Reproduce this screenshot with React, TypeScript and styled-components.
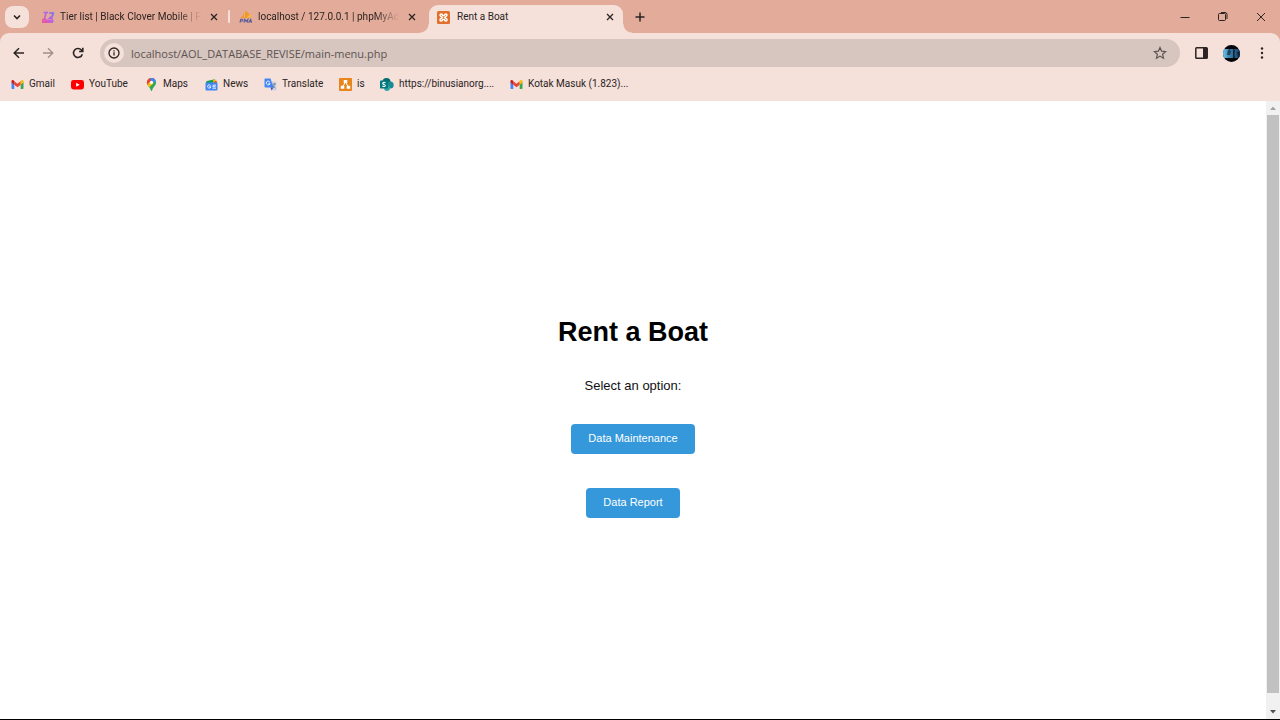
import React from "react";
import styled, { createGlobalStyle } from "styled-components";

const GlobalStyle = createGlobalStyle`
  *, *::before, *::after { box-sizing: border-box; }
  body { margin: 0; background: #fff; }
  button { border: 0; padding: 0; margin: 0; background: none; font: inherit; color: inherit; cursor: pointer; }
  a { color: inherit; text-decoration: none; }
  svg { display: block; flex: none; }
`;

const Window = styled.div`
  display: flex;
  flex-direction: column;
  min-height: 100vh;
  border-bottom: 1px solid #000;
  font-family: Roboto, "Open Sans", sans-serif;
  font-size: 10px;
  color: #2b2422;
`;

const TabStrip = styled.header`
  display: flex;
  align-items: stretch;
  height: 33px;
  padding-left: 5px;
  background: #e3ab99;
`;

const TabSearch = styled.button`
  display: grid;
  place-items: center;
  align-self: center;
  width: 24px;
  height: 22px;
  margin-right: 4px;
  border-radius: 8px;
  background: #f5e0da;
`;

const TabList = styled.div`
  display: flex;
  padding-top: 5px;
`;

const TabItem = styled.div<{ $active?: boolean; $divided?: boolean }>`
  position: relative;
  display: flex;
  align-items: center;
  gap: ${(p) => (p.$active ? 7 : 5)}px;
  width: ${(p) => (p.$active ? 194 : 198)}px;
  height: 28px;
  padding: 0 ${(p) => (p.$active ? 5 : 9)}px 4px 8px;
  border-radius: 9px 9px 0 0;
  background: ${(p) => (p.$active ? "#f5e0da" : "transparent")};

  ${(p) =>
    p.$active &&
    `
    &::before, &::after {
      content: "";
      position: absolute;
      bottom: 0;
      width: 9px;
      height: 9px;
    }
    &::before { left: -9px; background: radial-gradient(circle at 0 0, transparent 8px, #f5e0da 9px); }
    &::after { right: -9px; background: radial-gradient(circle at 100% 0, transparent 8px, #f5e0da 9px); }
  `}
  ${(p) =>
    p.$divided &&
    `
    &::before {
      content: "";
      position: absolute;
      left: -3px;
      top: 5px;
      width: 2px;
      height: 13px;
      border-radius: 1px;
      background: #f5e0da;
    }
  `}
`;

const TabTitle = styled.button<{ $fade?: boolean }>`
  flex: 1;
  min-width: 0;
  height: 16px;
  line-height: 16px;
  overflow: hidden;
  white-space: nowrap;
  text-align: left;
  ${(p) => p.$fade && "mask-image: linear-gradient(to right, #000 calc(100% - 24px), transparent);"}
`;

const SmallButton = styled.button`
  display: grid;
  place-items: center;
  width: 16px;
  height: 16px;
  flex: none;
`;

const NewTab = styled(SmallButton)`
  align-self: center;
  margin-left: 9px;
`;

const WindowControls = styled.div`
  display: flex;
  margin-left: auto;
`;

const WindowButton = styled.button`
  display: grid;
  place-items: center;
  width: 38px;
`;

const ToolbarArea = styled.div`
  background: #e3ab99;
`;

const ToolbarPanel = styled.div`
  height: 68px;
  padding: 6px 8px 0;
  border-radius: 9px 9px 0 0;
  background: #f5e0da;
`;

const Toolbar = styled.div`
  display: flex;
  align-items: center;
  height: 28px;
`;

const ToolButton = styled.button`
  display: grid;
  place-items: center;
  width: 30px;
  height: 28px;
  flex: none;

  &:first-child { width: 22px; margin-right: 3px; }
  &:last-child { width: 22px; margin-left: 5px; margin-right: -1px; }
  &:disabled { color: #a28f89; }
`;

const AddressBar = styled.form`
  display: flex;
  align-items: center;
  gap: 7px;
  flex: 1;
  height: 28px;
  margin: 0 6px 0 7px;
  padding: 0 12px 0 4px;
  border-radius: 14px;
  background: #d7c5bf;
`;

const SiteInfo = styled.button`
  display: grid;
  place-items: center;
  width: 20px;
  height: 20px;
  border-radius: 10px;
  background: #f5e0da;
`;

const AddressInput = styled.input`
  flex: 1;
  min-width: 0;
  height: 20px;
  padding: 0;
  border: 0;
  outline: 0;
  background: none;
  font-family: "Open Sans", "Noto Sans", sans-serif;
  font-size: 11px;
  color: #5d5451;
`;

const Bookmarks = styled.nav`
  display: flex;
  align-items: center;
  height: 34px;
  padding-left: 3px;
`;

const Bookmark = styled.a<{ $width: number }>`
  display: flex;
  align-items: center;
  gap: 5px;
  width: ${(p) => p.$width}px;
  line-height: 16px;
  white-space: nowrap;
`;

const Viewport = styled.div`
  display: flex;
  flex: 1;
  background: #fff;
`;

const Page = styled.main`
  display: flex;
  flex: 1;
  flex-direction: column;
  align-items: center;
  justify-content: center;
  gap: 28px;
  padding-top: 14px;
  font-family: "Liberation Sans", Arial, sans-serif;
`;

const Title = styled.h1`
  margin: 0;
  font-size: 27px;
  line-height: 32px;
  color: #000;
`;

const Prompt = styled.p`
  margin: 0;
  font-size: 13px;
  line-height: 20px;
  color: #111;
`;

const Options = styled.div`
  display: flex;
  flex-direction: column;
  align-items: center;
  gap: 34px;
`;

const OptionButton = styled.button`
  height: 30px;
  padding: 0 17px 2px;
  border-radius: 4px;
  background: #3498db;
  font-size: 11px;
  color: #fff;
`;

const ScrollTrack = styled.div`
  display: flex;
  flex-direction: column;
  width: 14px;
  background: #f1f1f1;
`;

const ScrollArrow = styled.div`
  display: grid;
  place-items: center;
  height: 14px;
`;

const ScrollThumb = styled.div`
  flex: 1;
  margin: 0 1px 12px;
  background: #c1c1c1;
`;

const Stroke = ({ d, size = 14, width = 1.5 }: { d: string; size?: number; width?: number }) => (
  <svg width={size} height={size} viewBox={`0 0 ${size} ${size}`} fill="none" stroke="currentColor" strokeWidth={width}>
    <path d={d} />
  </svg>
);

const CloseIcon = () => <Stroke size={8} width={1.3} d="M1 1l6 6M7 1l-6 6" />;

const TierIcon = () => (
  <svg width="14" height="14" viewBox="0 0 14 14">
    <defs>
      <linearGradient id="tier" x1="0" y1="13" x2="13" y2="1" gradientUnits="userSpaceOnUse">
        <stop offset="0" stopColor="#fb4d86" />
        <stop offset=".5" stopColor="#c062e0" />
        <stop offset="1" stopColor="#5f74fa" />
      </linearGradient>
    </defs>
    <g fill="none" stroke="url(#tier)" strokeWidth="1.700">
      <path d="M2.500 2.500h4.500M5 2.500L3.500 9M8 3h4.200l-.6 2.700L8 8.700h4" />
      <path d="M1 9.700h3.500l.7 1.300h7.300M1 12h11" strokeWidth="2" />
    </g>
  </svg>
);

const PhpMyAdminIcon = () => (
  <svg width="14" height="14" viewBox="0 0 14 14">
    <path d="M5 2v6H1.500C3.500 6.500 4.500 4.500 5 2zM6 1c3.500 1 5 3.500 5.200 7H6z" fill="#f39a1e" />
    <path d="M8 7c1.500-2 3.500-2.500 5-2-.8 1-1 2-1 3H8z" fill="#f7b44c" />
    <path
      d="M1 12.700l.7-3.400h1.500q1 .2.600 1.200-.4.700-2.200.6M5 12.700l.8-3.400 1.200 2 1.900-2-.7 3.400M9.500 12.700l2.200-3.400.9 3.400M10.400 11.600h2"
      fill="none"
      stroke="#5a5d98"
      strokeWidth="1.100"
    />
  </svg>
);

const XamppIcon = () => (
  <svg width="13" height="13" viewBox="0 0 13 13">
    <rect width="13" height="13" rx="1.500" fill="#e2702a" />
    <path
      d="M4.200 3C2.800 3 2.500 4.800 3.800 5.300L5.200 6.500 3.800 7.700C2.500 8.300 2.800 10 4.200 10c1 0 1.300-.7 1.300-1.500h2c0 .8.300 1.500 1.300 1.500 1.400 0 1.700-1.700.400-2.300L7.800 6.500l1.400-1.200C10.500 4.800 10.200 3 8.800 3c-1 0-1.300.7-1.300 1.500h-2C5.500 3.700 5.200 3 4.200 3z"
      fill="none"
      stroke="#fff"
      strokeWidth="1.400"
    />
  </svg>
);

const GmailIcon = () => (
  <svg width="13" height="13" viewBox="0 0 13 13">
    <path d="M.5 4v6.200q0 .8.8.8h2V5.500z" fill="#4285f4" />
    <path d="M12.500 4v6.200q0 .8-.8.8h-2V5.500z" fill="#34a853" />
    <path d="M3.300 3.200l3.200 2.500 3.200-2.500v3.600L6.500 9.200 3.300 6.800z" fill="#ea4335" />
    <path d="M.5 4.600V3.200c0-1.100 1.200-1.600 2-1l.8.700v3.900z" fill="#c5221f" />
    <path d="M12.500 4.600V3.200c0-1.100-1.200-1.600-2-1l-.8.700v3.900z" fill="#fbbc04" />
  </svg>
);

const YouTubeIcon = () => (
  <svg width="13" height="13" viewBox="0 0 13 13">
    <rect y="2" width="13" height="9.500" rx="2.400" fill="#f00" />
    <path d="M5.200 4.700v4.100l3.500-2.050z" fill="#fff" />
  </svg>
);

const MapsIcon = () => (
  <svg width="13" height="13" viewBox="0 0 13 13">
    <defs>
      <clipPath id="pin">
        <path d="M6.500 0C3.800 0 1.900 2 1.900 4.500c0 3 3.200 4.500 4 7.900q.6 1.200 1.200 0c.8-3.400 4-4.900 4-7.900C11.100 2 9.200 0 6.500 0z" />
      </clipPath>
    </defs>
    <g clipPath="url(#pin)">
      <path d="M0 0h13v13H0z" fill="#34a853" />
      <path d="M0 9.500L10 0H0z" fill="#ea4335" />
      <path d="M5 0h8v2L7 5z" fill="#4285f4" />
      <path d="M1 7.500l4-3.500 3 1.500-5 5z" fill="#fbbc04" />
    </g>
    <circle cx="6.500" cy="4.500" r="1.700" fill="#fff" />
  </svg>
);

const NewsIcon = () => (
  <svg width="13" height="13" viewBox="0 0 13 13">
    <path d="M2 3l8-1.800.8 3.500H2z" fill="#34a853" />
    <path d="M7 1.500l5 1.200-.7 3H7z" fill="#fbbc04" />
    <path d="M1 3.500L8 2l.5 3H1z" fill="#0f9d58" />
    <path d="M9.500 3l2.500.6-.5 2h-2z" fill="#ea4335" />
    <rect x=".5" y="4.500" width="12" height="8" rx="1" fill="#4285f4" />
    <path d="M5.500 7.500a1.600 1.600 0 1 0 .3 1.200H4.300M7.500 7.200H11M7.500 8.700h3M7.500 10.200H11" fill="none" stroke="#fff" strokeWidth=".9" />
  </svg>
);

const TranslateIcon = () => (
  <svg width="13" height="13" viewBox="0 0 13 13">
    <path d="M5 3.500h6.500q1 0 1 1v7q0 1-1 1H7.500z" fill="#cfd3dc" />
    <path d="M1.500.5h5l3 9h-8q-1 0-1-1v-7q0-1 1-1z" fill="#4285f4" />
    <path d="M6.500 9.500h3l-2 3z" fill="#2a56c6" />
    <path d="M5.700 3.800a1.900 1.900 0 1 0 .4 1.400H4.400" fill="none" stroke="#fff" strokeWidth=".9" />
    <path d="M8.500 6h3.500M10.300 5v1c0 1.700-.7 3-1.600 4M9 7.200c.5 1.400 1.400 2.300 2.500 3" fill="none" stroke="#607d9c" strokeWidth=".8" />
  </svg>
);

const DiagramIcon = () => (
  <svg width="13" height="13" viewBox="0 0 13 13">
    <rect width="13" height="13" rx="1" fill="#e8851c" />
    <path d="M6.500 4L3.500 9M6.500 4l3 5" stroke="#fff" strokeWidth="1" />
    <path d="M4.700 2h3.600v3H4.700zM1.800 7.800h3.500v3H1.800zM7.700 7.800h3.500v3H7.700z" fill="#fff" />
  </svg>
);

const SharePointIcon = () => (
  <svg width="14" height="13" viewBox="0 0 14 13">
    <circle cx="6.500" cy="4" r="4" fill="#036c70" />
    <circle cx="10.200" cy="7" r="3.500" fill="#1a8b90" />
    <circle cx="7" cy="10" r="2.900" fill="#2ba5ab" />
    <rect y="2.500" width="8" height="8" rx=".8" fill="#03787c" />
    <path d="M5.500 4.800Q3.800 3.900 2.900 4.800c-.5.900.2 1.300 1.100 1.700s1.600.8 1.100 1.600q-1 .9-2.700 0" fill="none" stroke="#fff" strokeWidth="1.100" />
  </svg>
);

const Avatar = () => (
  <svg width="17" height="17" viewBox="0 0 17 17">
    <defs>
      <clipPath id="face">
        <circle cx="8.500" cy="8.500" r="8.500" />
      </clipPath>
      <linearGradient id="scene">
        <stop offset="0" stopColor="#6cc6ea" />
        <stop offset=".35" stopColor="#3d86b0" />
        <stop offset="1" stopColor="#173f66" />
      </linearGradient>
    </defs>
    <g clipPath="url(#face)">
      <path d="M0 0h17v17H0z" fill="#05070b" />
      <path d="M0 4h17v9H0z" fill="url(#scene)" />
      <path d="M5 5l2-1 1 3-1 3H4z" fill="#1d4463" />
      <path d="M10 4l2 1-.5 4 .5 4h-2zM14 7l3-1v7h-2z" fill="#10263b" />
    </g>
  </svg>
);

const bookmarks = [
  { label: "Gmail", icon: <GmailIcon />, width: 60 },
  { label: "YouTube", icon: <YouTubeIcon />, width: 74 },
  { label: "Maps", icon: <MapsIcon />, width: 60 },
  { label: "News", icon: <NewsIcon />, width: 59 },
  { label: "Translate", icon: <TranslateIcon />, width: 75 },
  { label: "is", icon: <DiagramIcon />, width: 41 },
  { label: "https://binusianorg....", icon: <SharePointIcon />, width: 130 },
  { label: "Kotak Masuk (1.823)...", icon: <GmailIcon />, width: 130 },
];

const tabs = [
  { title: "Tier list | Black Clover Mobile | P", icon: <TierIcon /> },
  { title: "localhost / 127.0.0.1 | phpMyAd", icon: <PhpMyAdminIcon />, divided: true },
  { title: "Rent a Boat", icon: <XamppIcon />, active: true },
];

export default function App() {
  return (
    <>
      <GlobalStyle />
      <Window>
        <TabStrip>
          <TabSearch aria-label="Search tabs">
            <Stroke size={8} width={1.6} d="M1 2.500l3 3 3-3" />
          </TabSearch>
          <TabList>
            {tabs.map((tab) => (
              <TabItem key={tab.title} $active={tab.active} $divided={tab.divided}>
                {tab.icon}
                <TabTitle $fade={!tab.active}>{tab.title}</TabTitle>
                <SmallButton aria-label="Close tab">
                  <CloseIcon />
                </SmallButton>
              </TabItem>
            ))}
          </TabList>
          <NewTab aria-label="New tab">
            <Stroke size={10} d="M5 .5v9M.5 5h9" />
          </NewTab>
          <WindowControls>
            <WindowButton aria-label="Minimize">
              <Stroke size={10} width={1} d="M.5 5.500h9" />
            </WindowButton>
            <WindowButton aria-label="Restore">
              <Stroke size={10} width={1} d="M2 1.500h4.500q1 0 1 1v5q0 1-1 1h-5q-1 0-1-1v-5q0-1 1-1zM3 .5h4q2 0 2 2v4.500" />
            </WindowButton>
            <WindowButton aria-label="Close">
              <Stroke size={10} width={1} d="M1 1l8 8M9 1L1 9" />
            </WindowButton>
          </WindowControls>
        </TabStrip>

        <ToolbarArea>
          <ToolbarPanel>
            <Toolbar>
              <ToolButton aria-label="Back">
                <Stroke size={12} d="M11 6H1.500M6 1.200L1.200 6 6 10.800" />
              </ToolButton>
              <ToolButton aria-label="Forward" disabled>
                <Stroke size={12} width={1.300} d="M1 6h9.500M6 1.200L10.800 6 6 10.800" />
              </ToolButton>
              <ToolButton aria-label="Reload">
                <Stroke size={12} width={1.6} d="M10.300 7.200A4.500 4.500 0 1 1 9.400 3l1.200 1.200M10.800.8v3.700H7.100" />
              </ToolButton>
              <AddressBar onSubmit={(e) => e.preventDefault()}>
                <SiteInfo type="button" aria-label="View site information">
                  <svg width="12" height="12" viewBox="0 0 12 12" fill="none" stroke="#2b2422" strokeWidth="1.300">
                    <circle cx="6" cy="6" r="5" />
                    <path d="M6 5.300v3.300M6 3.200v1.300" />
                  </svg>
                </SiteInfo>
                <AddressInput aria-label="Address" defaultValue="localhost/AOL_DATABASE_REVISE/main-menu.php" />
                <SmallButton type="button" aria-label="Bookmark this page">
                  <svg width="14" height="14" viewBox="0 0 14 14" fill="none" stroke="#5d5451" strokeWidth="1.200">
                    <path d="M7 1.500l1.600 3.700 4 .4-3 2.700.9 3.900L7 10.100l-3.500 2.100.9-3.900-3-2.700 4-.4z" />
                  </svg>
                </SmallButton>
              </AddressBar>
              <ToolButton aria-label="Side panel">
                <svg width="13" height="12" viewBox="0 0 13 12">
                  <rect x=".8" y=".8" width="11.400" height="10.400" rx=".8" fill="none" stroke="#2b2422" strokeWidth="1.500" />
                  <path d="M8 1h4.500v10H8z" fill="#2b2422" />
                </svg>
              </ToolButton>
              <ToolButton aria-label="Profile">
                <Avatar />
              </ToolButton>
              <ToolButton aria-label="Menu">
                <svg width="4" height="12" viewBox="0 0 4 12" fill="#2b2422">
                  <circle cx="2" cy="1.500" r="1.200" />
                  <circle cx="2" cy="6" r="1.200" />
                  <circle cx="2" cy="10.500" r="1.200" />
                </svg>
              </ToolButton>
            </Toolbar>
            <Bookmarks aria-label="Bookmarks">
              {bookmarks.map((item) => (
                <Bookmark key={item.label} href="#" $width={item.width}>
                  {item.icon}
                  {item.label}
                </Bookmark>
              ))}
            </Bookmarks>
          </ToolbarPanel>
        </ToolbarArea>

        <Viewport>
          <Page>
            <Title>Rent a Boat</Title>
            <Prompt>Select an option:</Prompt>
            <Options>
              <OptionButton>Data Maintenance</OptionButton>
              <OptionButton>Data Report</OptionButton>
            </Options>
          </Page>
          <ScrollTrack aria-hidden="true">
            <ScrollArrow>
              <svg width="6" height="4" viewBox="0 0 6 4">
                <path d="M0 4l3-3.500L6 4z" fill="#a3a3a3" />
              </svg>
            </ScrollArrow>
            <ScrollThumb />
            <ScrollArrow>
              <svg width="6" height="4" viewBox="0 0 6 4">
                <path d="M0 0l3 3.500L6 0z" fill="#505050" />
              </svg>
            </ScrollArrow>
          </ScrollTrack>
        </Viewport>
      </Window>
    </>
  );
}
